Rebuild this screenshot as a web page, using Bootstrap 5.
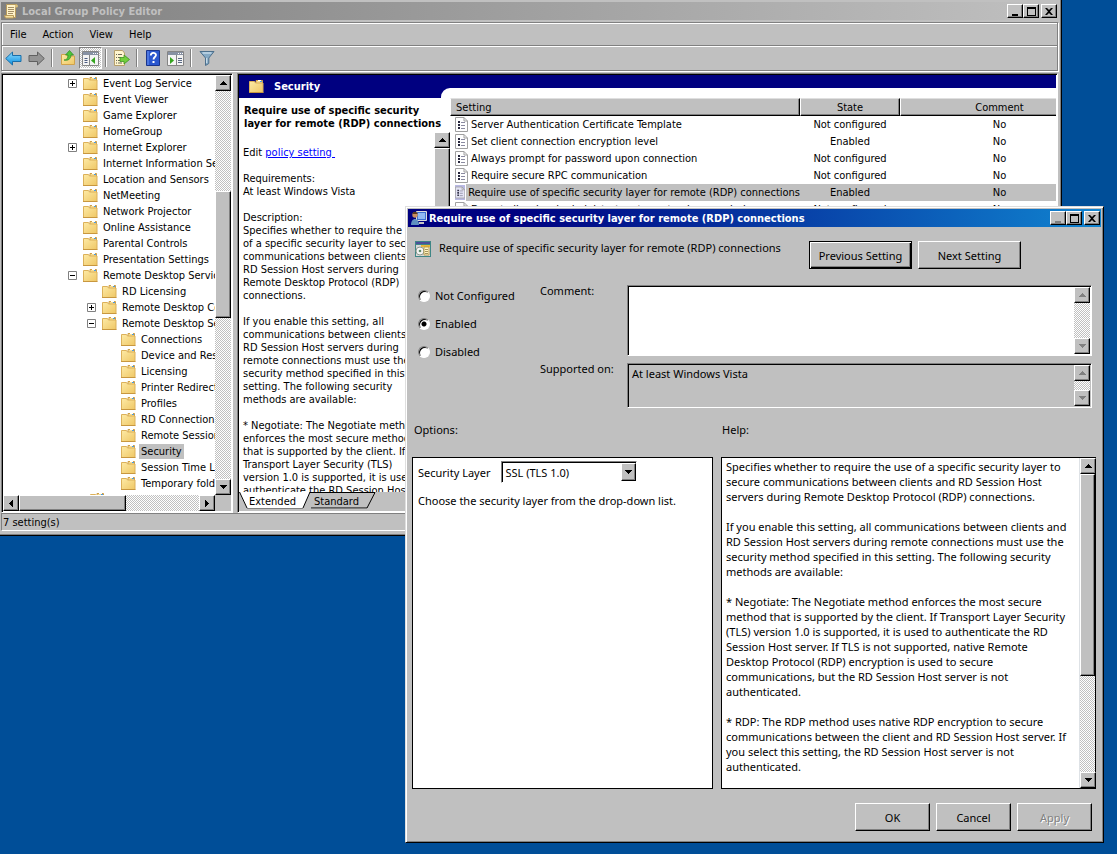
<!DOCTYPE html>
<html lang="en">
<head>
<meta charset="utf-8">
<meta name="viewport" content="width=device-width, initial-scale=1">
<title>Local Group Policy Editor</title>
<link rel="stylesheet" href="https://cdn.jsdelivr.net/npm/bootstrap@5.3.0/dist/css/bootstrap.min.css">
<style>
:root{--face:#c0c0c0;--shade:#808080;--ui:"DejaVu Sans Condensed","DejaVu Sans",sans-serif;--dlg:"Noto Sans","Open Sans",sans-serif}
body{background:#004e98;color:#000;font:11px/13px var(--ui);min-height:100vh;overflow:hidden}
button,input,select,textarea{font:inherit;color:inherit}
.win{position:absolute;background:var(--face);border:1px solid;border-color:#dfdfdf #000 #000 #dfdfdf;box-shadow:inset 1px 1px 0 #fff,inset -1px -1px 0 var(--shade)}
.win-main{left:-3px;right:55px;top:-2px;padding:3px 3px 4px}
.win-dialog{left:405px;right:13px;top:206px;padding:2px;font:11px/15px var(--dlg)}
.caption{height:18px;padding:0 1px 0 3px;font:bold 11px/13px var(--ui)}
.caption-off{background:linear-gradient(90deg,#808080,#c0c0c0);color:#c0c0c0}
.caption-on{background:linear-gradient(90deg,#000080,#000080 15%,#1084d0);color:#fff}
.raised{background:var(--face);border:1px solid;border-color:#fff #000 #000 #fff;box-shadow:inset -1px -1px 0 var(--shade);border-radius:0;padding:0}
.sunken{border:1px solid;border-color:var(--shade) #fff #fff var(--shade);box-shadow:inset 1px 1px 0 #000}
.cap-btn{width:16px;height:14px;display:flex;align-items:center;justify-content:center;color:#000}
.cap-btn:last-child{margin-left:2px}
.cap-btn:disabled{color:var(--shade)}
.frame{border:1px solid var(--shade);box-shadow:1px 1px 0 #fff,inset 1px 1px 0 #fff;margin:2px 0}
.bar{height:24px}
.menu-bar{height:23px;border-bottom:1px solid var(--shade);box-shadow:0 1px 0 #fff}
.menu-link{color:#000;text-decoration:none;padding:0 8px}
.tool{width:23px;height:22px;border:0;background:none;padding:0;display:flex;align-items:center;justify-content:center}
.checks{background:repeating-conic-gradient(#fff 0 25%,#c0c0c0 0 50%) 0 0/2px 2px}
.tool.checks{border:1px solid;border-color:var(--shade) #fff #fff var(--shade)}
.divider{width:8px;height:18px;display:flex;justify-content:center}
.divider::before{content:"";width:2px;background:var(--shade);border-right:1px solid #fff}
.sb-v{width:16px;flex:none;display:flex;flex-direction:column}
.sb-h{height:16px;flex:none;display:flex}
.sb-btn{width:16px;height:16px;flex:none;display:flex;align-items:center;justify-content:center}
.sb-off{color:var(--shade)}
.corner{width:16px;background:var(--face)}
.workspace{height:440px;gap:4px}
.tree-pane{width:232px;padding:1px;background:#fff}
.tree-view{list-style:none;margin:0;padding:0;white-space:nowrap}
.tree-view li{height:16px;display:flex;align-items:center;padding-left:80px}
.tree-view .lv1{padding-left:99px}
.tree-view .lv2{padding-left:118px}
.tree-view .box{width:9px;height:9px;margin:0 6px 0 -15px;flex:none}
.tree-view .dir{margin-right:3px}
.tree-view span{padding:1px 2px}
.dir{width:15px;height:15px;flex:none}
.picked{background:var(--face)}
.result-pane{padding:1px;background:#fff}
.result-head{height:23px;background:#000080;color:#fff}
.result-head .name-part{width:202px;padding-left:10px;gap:10px}
.result-head .curve{height:10px;background:#fff;border-top-left-radius:9px}
.result-body{min-height:0}
.info{width:211px;white-space:nowrap}
.info h1{font:bold 11px/13px var(--ui);margin:0;padding:6px 0 2px 5px}
.info-text{padding:14px 0 0 4px;line-height:13px}
.info-text p{margin-bottom:13px}
.info-text a{color:#00f}
.listing{table-layout:fixed;width:649px;border-collapse:separate;border-spacing:0;line-height:13px;white-space:nowrap}
.listing th{height:18px;padding:1px 5px;font-weight:400;background:var(--face);border:1px solid;border-color:#dfdfdf #000 #000 #fff;box-shadow:inset -1px -1px 0 var(--shade)}
.listing td{height:17px;padding:0;text-align:center}
.listing .c-policy{width:350px}
.listing .c-state{width:100px}
.listing .policy{display:flex;align-items:center;text-align:left;padding-left:5px}
.listing .policy span{flex:1;line-height:17px;padding-left:2px;margin-left:1px}
.chosen .policy span,.chosen td+td{background:var(--face)}
.chosen svg{background:#b9b9e4}
.tabs{height:19px;background:var(--face);position:relative}
.tabs svg{position:absolute;left:0;top:0}
.tabs button{position:relative;background:none;border:0;padding:0;height:18px}
.tabs button:first-of-type{margin:0 18px 0 10px}
.status{height:18px;padding:2px 1px;border:1px solid;border-color:var(--shade) #fff #fff var(--shade)}
.dlg-body{padding:14px 5px 9px 4px}
.dlg-btn{height:28px;width:75px}
.dlg-btn.wide{width:103px}
.dlg-btn.main{border-color:#000;box-shadow:inset 1px 1px 0 #fff,inset -1px -1px 0 #000,inset -2px -2px 0 var(--shade)}
.dlg-btn:disabled{color:var(--shade);text-shadow:1px 1px 0 #fff}
.policy-name{width:370px;margin:-1px 0 0 8px}
.details{padding:16px 4px 0 0}
.states{width:128px;padding:3px 0 0 6px}
.states .choice{height:28px;display:flex;align-items:flex-start}
.states input{appearance:none;width:12px;height:12px;flex:none;margin:2px 5px 0 0;border-radius:50%;background:#fff;border:1px solid;border-color:var(--shade) #fff #fff var(--shade);box-shadow:inset 1px 1px 0 #000}
.states input:checked{background:radial-gradient(#000 0 2px,#fff 3px)}
.field-name{width:87px;flex:none;margin-top:-2px}
.field{height:71px;padding:1px}
.field.short{height:45px}
.field textarea{border:0;resize:none;background:none;padding:1px 3px;outline:0;overflow:hidden}
.halves{display:grid;grid-template-columns:301fr 375fr;gap:8px}
.halves>*{min-width:0}
.half-names{padding:14px 0 20px 2px}
.pane{height:332px;background:#fff;border:1px solid #000}
.pane-left{padding:3px 5px}
.help{padding:1px 4px;white-space:nowrap}
.help p{margin-bottom:15px}
.combo{position:relative;width:136px;height:22px;margin-left:11px}
.combo select{appearance:none;width:100%;height:100%;background:#fff;border-radius:0;padding:0 3px}
.combo .raised{position:absolute;right:1px;top:2px;width:15px;height:18px;pointer-events:none;display:flex;align-items:center;justify-content:center}
.dlg-foot{gap:6px;padding:14px 4px 0 0}
</style>
<script src="https://cdn.jsdelivr.net/npm/bootstrap@5.3.0/dist/js/bootstrap.bundle.min.js"></script>
</head>
<body>
<svg class="position-absolute" width="0" height="0" aria-hidden="true">
<defs><linearGradient id="fg" x1="0" y1="0" x2="1" y2="1"><stop stop-color="#fdeaa6"/><stop offset="1" stop-color="#efc765"/></linearGradient>
<linearGradient id="bl" x1="0" y1="0" x2="0" y2="1"><stop stop-color="#8fdcff"/><stop offset="1" stop-color="#0a8fe0"/></linearGradient></defs>
<symbol id="dir" viewBox="0 0 15 15"><path d="M7 4V1.500h6.500V5" fill="#f6dc93" stroke="#cf9f48"/><path d="M9 1.500h3" stroke="#fff"/><path d="M11 2.500h2" stroke="#4a9be0"/><path d="M.5 2.500h5l1 1.500h7.500v9.500H.5z" fill="url(#fg)" stroke="#dcb15a"/><path d="M0 13.500h14.500" stroke="#c8973f"/></symbol>
<symbol id="plus" viewBox="0 0 9 9"><path d="M.5.5h8v8h-8z" fill="#fff" stroke="#808080"/><path d="M2 4.500h5M4.500 2v5" stroke="#000"/></symbol>
<symbol id="minus" viewBox="0 0 9 9"><path d="M.5.5h8v8h-8z" fill="#fff" stroke="#808080"/><path d="M2 4.500h5" stroke="#000"/></symbol>
<symbol id="up" viewBox="0 0 7 4"><path d="M3 0h1v1h1v1h1v1h1v1H0V3h1V2h1V1h1z" fill="currentColor"/></symbol>
<symbol id="down" viewBox="0 0 7 4"><path d="M0 0h7v1H6v1H5v1H4v1H3V3H2V2H1V1H0z" fill="currentColor"/></symbol>
<symbol id="lt" viewBox="0 0 4 7"><path d="M4 0v7H3V6H2V5H1V4H0V3h1V2h1V1h1V0z"/></symbol>
<symbol id="rt" viewBox="0 0 4 7"><path d="M0 0h1v1h1v1h1v1h1v1H3v1H2v1H1v1H0z"/></symbol>
<symbol id="doc" viewBox="0 0 13 15"><path d="M.5.5h8.500l3.500 3.500v10.500H.5z" fill="#fff" fill-opacity=".6" stroke="#a0a0a0"/><path d="M9 .5V4h3.500" fill="none" stroke="#a0a0a0"/><path d="M3 4h2v2H3zM3 7h2v2H3zM3 10h2v2H3z" fill="#26263c"/><path d="M6 5.500h4M6 8.500h4M6 11.500h4" stroke="#8a8aa0"/></symbol>
<symbol id="w-min" viewBox="0 0 9 9"><path d="M1 7h6v2H1z" fill="currentColor"/></symbol>
<symbol id="w-max" viewBox="0 0 9 9"><path d="M0 0h9v9H0zM1 2v6h7V2z" fill-rule="evenodd"/></symbol>
<symbol id="w-close" viewBox="0 0 8 7"><path d="M0 0h2l2 2 2-2h2L5 3.500 8 7H6L4 5 2 7H0l3-3.500z"/></symbol>
</svg>

<main>
<section class="win win-main" aria-label="Local Group Policy Editor">
  <header class="caption caption-off d-flex align-items-center">
    <svg width="14" height="16" viewBox="0 0 14 16"><path d="M2.500 1.500h10l-1 3v10h-9z" fill="#fff3c8" stroke="#b89b5c"/><path d="M4 4.500h6M4 6.500h6M4 8.500h6M4 10.500h5" stroke="#a58f66"/><path d="M.5 12.500h9v2.500h-8z" fill="#f7e2a0" stroke="#b89b5c"/><circle cx="12.500" cy="3" r="1.500" fill="#d9bf7a"/></svg>
    <span class="ms-1 flex-grow-1">Local Group Policy Editor</span>
    <button class="raised cap-btn" aria-label="Minimize"><svg width="9" height="9"><use href="#w-min"/></svg></button>
    <button class="raised cap-btn" aria-label="Maximize"><svg width="9" height="9"><use href="#w-max"/></svg></button>
    <button class="raised cap-btn" aria-label="Close"><svg width="8" height="7"><use href="#w-close"/></svg></button>
  </header>
  <div class="frame">
    <nav class="menu-bar d-flex align-items-center" aria-label="Menu">
      <a class="menu-link" href="#">File</a><a class="menu-link" href="#">Action</a><a class="menu-link" href="#">View</a><a class="menu-link" href="#">Help</a>
    </nav>
    <div class="bar d-flex align-items-center" role="toolbar">
      <button class="tool" aria-label="Back"><svg width="17" height="15" viewBox="0 0 17 15"><path d="M.7 7.500 7.500 1v3.500h8.500v6H7.500V14z" fill="url(#bl)" stroke="#1b6ea8"/></svg></button>
      <button class="tool" aria-label="Forward"><svg width="17" height="15" viewBox="0 0 17 15"><path d="M16.300 7.500 9.500 1v3.500H1v6h8.500V14z" fill="#949494" stroke="#606060"/></svg></button>
      <i class="divider"></i>
      <button class="tool" aria-label="Up one level"><svg width="16" height="16" viewBox="0 0 16 16"><path d="M1.500 4.500h5l1 1.500h7v8.500h-13z" fill="url(#fg)" stroke="#d0a24c"/><path d="M4 10c3 0 4-2 4-5H5.500L9.500.5l4 4.500h-2.500c0 4-3 6-7 5z" fill="#4fc53a" stroke="#2b8a22" stroke-width=".7"/></svg></button>
      <button class="tool checks" aria-label="Show console tree"><svg width="17" height="15" viewBox="0 0 17 15"><path d="M.5.5h16v14H.5z" fill="#f4f4f4" stroke="#858585"/><path d="M1 1h15v3H1z" fill="#8791a3"/><path d="M11 2.500h1m1 0h1m1 0h1" stroke="#fff"/><path d="M7.500 4v10" stroke="#858585"/><path d="M2.500 7.500h3m-3 2h3m-3 2h3" stroke="#4b5b80"/><path d="M13 6v7L9 9.500z" fill="#35a51f"/></svg></button>
      <i class="divider"></i>
      <button class="tool" aria-label="Export list"><svg width="17" height="16" viewBox="0 0 17 16"><path d="M1.500.5h8l2 2.500v12.500h-10z" fill="#fff6cf" stroke="#b7a06b"/><path d="M3 4.500h1m1 0h4M3 7.500h1m1 0h3M3 10.500h1m1 0h3M3 13h1m1 0h4" stroke="#6e6a5a"/><path d="M7 7.500h4V5l5.500 4.500L11 14v-2.500H7z" fill="#72cf3c" stroke="#3f9423" stroke-width=".8"/></svg></button>
      <i class="divider"></i>
      <button class="tool" aria-label="Help"><svg width="14" height="16" viewBox="0 0 14 16"><path d="M.5.5h13v15H.5z" fill="#2b57cf" stroke="#19348c"/><path d="M2 1v14" stroke="#6f95ef"/><path d="M4.800 5.500c0-3.500 5.200-3.300 5.200-.5 0 2-2.500 2-2.500 4.500" fill="none" stroke="#fff" stroke-width="1.800"/><path d="M6.500 11h2v2h-2z" fill="#fff"/></svg></button>
      <button class="tool" aria-label="Show action pane"><svg width="17" height="15" viewBox="0 0 17 15"><path d="M.5.5h16v14H.5z" fill="#f4f4f4" stroke="#858585"/><path d="M1 1h15v3H1z" fill="#8791a3"/><path d="M11 2.500h1m1 0h1m1 0h1" stroke="#fff"/><path d="M9.500 4v10" stroke="#858585"/><path d="M11 7.500h4m-4 2h4m-4 2h4" stroke="#596984"/><path d="M3 6v7l4-3.500z" fill="#35a51f"/></svg></button>
      <i class="divider"></i>
      <button class="tool" aria-label="Filter"><svg width="16" height="16" viewBox="0 0 16 16"><path d="M1 1.500h14L9.800 8v5.500l-3.300 2V8z" fill="#85a9c4" stroke="#4c6f8c"/><path d="M3.500 3h9" stroke="#e2f0fa"/><path d="M7.700 8v5" stroke="#d5e5f0"/></svg></button>
    </div>
  </div>

  <div class="workspace d-flex">
    <div class="tree-pane sunken flex-shrink-0 d-flex flex-column">
      <div class="d-flex flex-fill overflow-hidden">
        <ul class="tree-view flex-fill overflow-hidden">
          <li><svg class="box"><use href="#plus"/></svg><svg class="dir"><use href="#dir"/></svg><span>Event Log Service</span></li>
          <li><svg class="dir"><use href="#dir"/></svg><span>Event Viewer</span></li>
          <li><svg class="dir"><use href="#dir"/></svg><span>Game Explorer</span></li>
          <li><svg class="dir"><use href="#dir"/></svg><span>HomeGroup</span></li>
          <li><svg class="box"><use href="#plus"/></svg><svg class="dir"><use href="#dir"/></svg><span>Internet Explorer</span></li>
          <li><svg class="dir"><use href="#dir"/></svg><span>Internet Information Se</span></li>
          <li><svg class="dir"><use href="#dir"/></svg><span>Location and Sensors</span></li>
          <li><svg class="dir"><use href="#dir"/></svg><span>NetMeeting</span></li>
          <li><svg class="dir"><use href="#dir"/></svg><span>Network Projector</span></li>
          <li><svg class="dir"><use href="#dir"/></svg><span>Online Assistance</span></li>
          <li><svg class="dir"><use href="#dir"/></svg><span>Parental Controls</span></li>
          <li><svg class="dir"><use href="#dir"/></svg><span>Presentation Settings</span></li>
          <li><svg class="box"><use href="#minus"/></svg><svg class="dir"><use href="#dir"/></svg><span>Remote Desktop Service</span></li>
          <li class="lv1"><svg class="dir"><use href="#dir"/></svg><span>RD Licensing</span></li>
          <li class="lv1"><svg class="box"><use href="#plus"/></svg><svg class="dir"><use href="#dir"/></svg><span>Remote Desktop Co</span></li>
          <li class="lv1"><svg class="box"><use href="#minus"/></svg><svg class="dir"><use href="#dir"/></svg><span>Remote Desktop Se</span></li>
          <li class="lv2"><svg class="dir"><use href="#dir"/></svg><span>Connections</span></li>
          <li class="lv2"><svg class="dir"><use href="#dir"/></svg><span>Device and Res</span></li>
          <li class="lv2"><svg class="dir"><use href="#dir"/></svg><span>Licensing</span></li>
          <li class="lv2"><svg class="dir"><use href="#dir"/></svg><span>Printer Redirect</span></li>
          <li class="lv2"><svg class="dir"><use href="#dir"/></svg><span>Profiles</span></li>
          <li class="lv2"><svg class="dir"><use href="#dir"/></svg><span>RD Connection</span></li>
          <li class="lv2"><svg class="dir"><use href="#dir"/></svg><span>Remote Session</span></li>
          <li class="lv2"><svg class="dir"><use href="#dir"/></svg><span class="picked">Security</span></li>
          <li class="lv2"><svg class="dir"><use href="#dir"/></svg><span>Session Time Lim</span></li>
          <li class="lv2"><svg class="dir"><use href="#dir"/></svg><span>Temporary folde</span></li>
          <li class="lv1" style="margin-left:-12px"><svg class="dir"><use href="#dir"/></svg></li>
        </ul>
        <div class="sb-v checks">
          <button class="raised sb-btn" aria-label="Scroll up"><svg width="7" height="4"><use href="#up"/></svg></button>
          <div style="flex:100"></div><div class="raised" style="flex:124"></div><div style="flex:161"></div>
          <button class="raised sb-btn" aria-label="Scroll down"><svg width="7" height="4"><use href="#down"/></svg></button>
        </div>
      </div>
      <div class="d-flex">
        <div class="sb-h checks flex-fill">
          <button class="raised sb-btn" aria-label="Scroll left"><svg width="4" height="7"><use href="#lt"/></svg></button>
          <div class="raised" style="flex:106"></div><div style="flex:74"></div>
          <button class="raised sb-btn" aria-label="Scroll right"><svg width="4" height="7"><use href="#rt"/></svg></button>
        </div>
        <div class="corner"></div>
      </div>
    </div>

    <div class="result-pane sunken flex-fill d-flex flex-column overflow-hidden">
      <div class="result-head d-flex flex-shrink-0">
        <div class="name-part d-flex align-items-center"><svg class="dir"><use href="#dir"/></svg><b>Security</b></div>
        <div class="curve flex-fill align-self-end"></div>
      </div>
      <div class="result-body d-flex flex-fill overflow-hidden">
        <article class="info flex-shrink-0 d-flex flex-column">
          <h1>Require use of specific security<br>layer for remote (RDP) connections</h1>
          <div class="d-flex flex-fill overflow-hidden">
            <div class="info-text flex-fill overflow-hidden">
              <p>Edit <a href="#">policy setting&nbsp;</a></p>
              <p>Requirements:<br>At least Windows Vista</p>
              <p>Description:<br>Specifies whether to require the use<br>of a specific security layer to secure<br>communications between clients and<br>RD Session Host servers during<br>Remote Desktop Protocol (RDP)<br>connections.</p>
              <p>If you enable this setting, all<br>communications between clients and<br>RD Session Host servers during<br>remote connections must use the<br>security method specified in this<br>setting. The following security<br>methods are available:</p>
              <p>* Negotiate: The Negotiate method<br>enforces the most secure method<br>that is supported by the client. If<br>Transport Layer Security (TLS)<br>version 1.0 is supported, it is used to<br>authenticate the RD Session Host</p>
            </div>
            <div class="sb-v checks">
              <button class="raised sb-btn" aria-label="Scroll up"><svg width="7" height="4"><use href="#up"/></svg></button>
              <div class="raised" style="flex:150"></div><div style="flex:170"></div>
              <button class="raised sb-btn" aria-label="Scroll down"><svg width="7" height="4"><use href="#down"/></svg></button>
            </div>
          </div>
        </article>
        <div class="flex-fill overflow-hidden">
          <table class="listing">
            <colgroup><col class="c-policy"><col class="c-state"><col></colgroup>
            <thead><tr><th>Setting</th><th class="text-center">State</th><th class="text-center">Comment</th></tr></thead>
            <tbody>
              <tr><td><div class="policy"><svg width="13" height="15"><use href="#doc"/></svg><span>Server Authentication Certificate Template</span></div></td><td>Not configured</td><td>No</td></tr>
              <tr><td><div class="policy"><svg width="13" height="15"><use href="#doc"/></svg><span>Set client connection encryption level</span></div></td><td>Enabled</td><td>No</td></tr>
              <tr><td><div class="policy"><svg width="13" height="15"><use href="#doc"/></svg><span>Always prompt for password upon connection</span></div></td><td>Not configured</td><td>No</td></tr>
              <tr><td><div class="policy"><svg width="13" height="15"><use href="#doc"/></svg><span>Require secure RPC communication</span></div></td><td>Not configured</td><td>No</td></tr>
              <tr class="chosen"><td><div class="policy"><svg width="13" height="15"><use href="#doc"/></svg><span>Require use of specific security layer for remote (RDP) connections</span></div></td><td>Enabled</td><td>No</td></tr>
              <tr><td><div class="policy"><svg width="13" height="15"><use href="#doc"/></svg><span>Do not allow local administrators to customize permissions</span></div></td><td>Not configured</td><td>No</td></tr>
            </tbody>
          </table>
        </div>
      </div>
      <div class="tabs d-flex flex-shrink-0">
        <svg width="140" height="18" viewBox="0 0 140 18" aria-hidden="true"><path d="M66 .5h70l-8 15.500H72" fill="#c0c0c0" stroke="#000"/><path d="M0 0h71l-7 16H8z" fill="#fff"/><path d="M.5 0 8 16M71 0l-7 16" stroke="#000"/><path d="M8 16.500h56m8 0h56" stroke="#808080"/></svg>
        <button>Extended</button><button>Standard</button>
      </div>
    </div>
  </div>
  <footer class="status">7 setting(s)</footer>
</section>

<section class="win win-dialog" role="dialog" aria-label="Policy setting">
  <header class="caption caption-on d-flex align-items-center">
    <svg width="16" height="16" viewBox="0 0 16 16"><path d="M5.500 1.500h10v9h-10z" fill="#3b6fd0" stroke="#dcdcdc"/><path d="M7 3h7v6H7z" fill="#8fb8f3"/><path d="M8 12h5v2H8z" fill="#c6c6c6"/><circle cx="4" cy="5" r="2.700" fill="#c98f5f"/><path d="M1.500 4c0-3 5-3 5 0z" fill="#5b3a1e"/><path d="M0 15c0-8 8-8 8 0z" fill="#5f8fc0"/></svg>
    <span class="flex-grow-1" style="padding-left:2px">Require use of specific security layer for remote (RDP) connections</span>
    <button class="raised cap-btn" aria-label="Minimize" disabled><svg width="9" height="9"><use href="#w-min"/></svg></button>
    <button class="raised cap-btn" aria-label="Maximize"><svg width="9" height="9"><use href="#w-max"/></svg></button>
    <button class="raised cap-btn" aria-label="Close"><svg width="8" height="7"><use href="#w-close"/></svg></button>
  </header>
  <form class="dlg-body" onsubmit="return false">
    <div class="d-flex" style="padding-left:3px">
      <svg width="16" height="16" viewBox="0 0 16 16"><path d="M0 0h16v16H0z" fill="#3f8686"/><path d="M1 1h14v2H1z" fill="#4a4f9a"/><path d="M1 4h14v11H1z" fill="#d8d8d8"/><path d="M6 4h9v2H6z" fill="#e8b83a"/><circle cx="5" cy="10" r="4" fill="#f5f5f5" stroke="#8e9a8e"/><circle cx="5" cy="10" r="1.300" fill="#5f8c6a"/><path d="M9 6h5v8H9z" fill="#fff4c4" stroke="#b08f3a" stroke-width=".8"/><path d="M10 8.500h3m-3 2h3m-3 2h3" stroke="#8b7a45" stroke-width=".8"/></svg>
      <span class="policy-name">Require use of specific security layer for remote (RDP) connections</span>
      <button class="raised dlg-btn wide main">Previous Setting</button>
      <button class="raised dlg-btn wide" style="margin-left:6px">Next Setting</button>
    </div>
    <div class="details d-flex">
      <fieldset class="states flex-shrink-0">
        <div class="choice"><input type="radio" name="st" id="s1"><label for="s1">Not Configured</label></div>
        <div class="choice"><input type="radio" name="st" id="s2" checked><label for="s2">Enabled</label></div>
        <div class="choice"><input type="radio" name="st" id="s3"><label for="s3">Disabled</label></div>
      </fieldset>
      <div class="flex-fill">
        <div class="d-flex" style="margin-bottom:7px">
          <label class="field-name" for="cm">Comment:</label>
          <div class="field sunken bg-white flex-fill d-flex"><textarea id="cm" class="flex-fill"></textarea>
            <div class="sb-v sb-off checks justify-content-between"><span class="raised sb-btn"><svg width="7" height="4"><use href="#up"/></svg></span><span class="raised sb-btn"><svg width="7" height="4"><use href="#down"/></svg></span></div></div>
        </div>
        <div class="d-flex">
          <label class="field-name" for="so">Supported on:</label>
          <div class="field short sunken flex-fill d-flex"><textarea id="so" class="flex-fill" readonly>At least Windows Vista</textarea>
            <div class="sb-v sb-off checks justify-content-between"><span class="raised sb-btn"><svg width="7" height="4"><use href="#up"/></svg></span><span class="raised sb-btn"><svg width="7" height="4"><use href="#down"/></svg></span></div></div>
        </div>
      </div>
    </div>
    <div class="halves half-names"><div>Options:</div><div>Help:</div></div>
    <div class="halves">
      <div class="pane pane-left">
        <div class="d-flex align-items-center"><label for="sl">Security Layer</label>
          <div class="combo"><select id="sl" class="sunken"><option>SSL (TLS 1.0)</option></select><span class="raised"><svg width="7" height="4"><use href="#down"/></svg></span></div></div>
        <p style="margin-top:10px">Choose the security layer from the drop-down list.</p>
      </div>
      <div class="pane pane-right d-flex">
        <div class="help flex-fill overflow-hidden">
          <p>Specifies whether to require the use of a specific security layer to<br>secure communications between clients and RD Session Host<br>servers during Remote Desktop Protocol (RDP) connections.</p>
          <p>If you enable this setting, all communications between clients and<br>RD Session Host servers during remote connections must use the<br>security method specified in this setting. The following security<br>methods are available:</p>
          <p>* Negotiate: The Negotiate method enforces the most secure<br>method that is supported by the client. If Transport Layer Security<br>(TLS) version 1.0 is supported, it is used to authenticate the RD<br>Session Host server. If TLS is not supported, native Remote<br>Desktop Protocol (RDP) encryption is used to secure<br>communications, but the RD Session Host server is not<br>authenticated.</p>
          <p class="mb-0">* RDP: The RDP method uses native RDP encryption to secure<br>communications between the client and RD Session Host server. If<br>you select this setting, the RD Session Host server is not<br>authenticated.</p>
        </div>
        <div class="sb-v checks border-start border-black">
          <button class="raised sb-btn" aria-label="Scroll up"><svg width="7" height="4"><use href="#up"/></svg></button>
          <div class="raised" style="flex:203"></div><div style="flex:97"></div>
          <button class="raised sb-btn" aria-label="Scroll down"><svg width="7" height="4"><use href="#down"/></svg></button>
        </div>
      </div>
    </div>
    <div class="dlg-foot d-flex justify-content-end">
      <button class="raised dlg-btn">OK</button><button class="raised dlg-btn">Cancel</button><button class="raised dlg-btn" disabled>Apply</button>
    </div>
  </form>
</section>
</main>
</body>
</html>
